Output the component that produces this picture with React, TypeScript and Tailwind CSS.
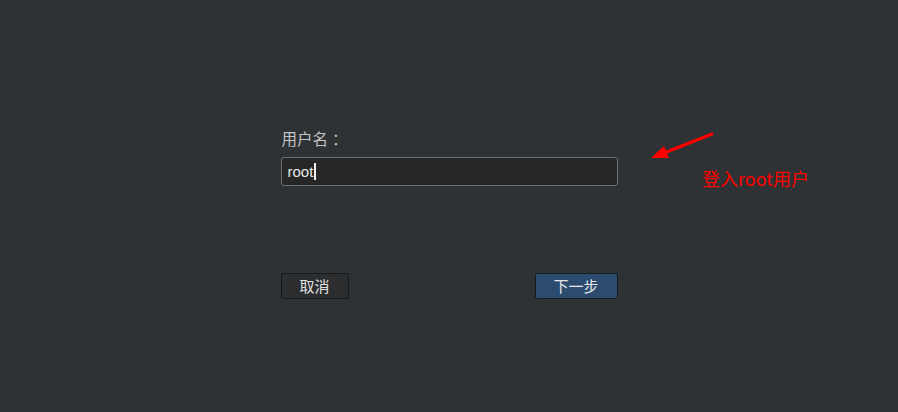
import React from "react";

export default function App() {
  return (
    <div
      className="relative w-[898px] h-[412px] overflow-hidden bg-[#2e3235]"
      style={{ fontFamily: '"Noto Sans CJK SC", "Liberation Sans", sans-serif' }}
    >
      <div className="flex justify-center pt-[127px]">
        <div className="w-[337px] flex flex-col">
          <div className="text-[15.5px] leading-[22px] text-[#c3c5c6] pl-[1px] flex">
            <span>用户名</span>
            <span className="ml-[4px]">：</span>
          </div>
          <div className="mt-[8px] h-[29px] rounded-[3px] border border-[#6e7070] bg-[#262626] flex items-center pl-[6px]">
            <span className="text-[15px] text-[#e8e8e8] leading-none" style={{ fontFamily: '"Liberation Sans", sans-serif' }}>root</span>
            <span className="ml-[1px] w-[2px] h-[17px] bg-[#f0f0f0]" />
          </div>
          <div className="mt-[87px] flex justify-between">
            <button className="w-[68px] h-[26px] rounded-[2px] border border-[#161819] bg-[#2b2d2f] text-[15px] text-[#e0e0e0] flex items-center justify-center">
              取消
            </button>
            <button className="w-[83px] h-[26px] rounded-[2px] border border-[#161a1e] bg-[#2b4c6f] text-[15px] text-[#e6e6e6] flex items-center justify-center">
              下一步
            </button>
          </div>
        </div>
      </div>
      <svg className="absolute left-0 top-0" width="898" height="412">
        <line x1="712" y1="134" x2="664" y2="153" stroke="#ff0000" strokeWidth="3" strokeLinecap="round" />
        <polygon points="651,158 664,146 669,158" fill="#ff0000" />
      </svg>
      <div className="absolute left-[702px] top-[166px] text-[18px] leading-[25px] text-[#ff0000]">
        登入root用户
      </div>
    </div>
  );
}
